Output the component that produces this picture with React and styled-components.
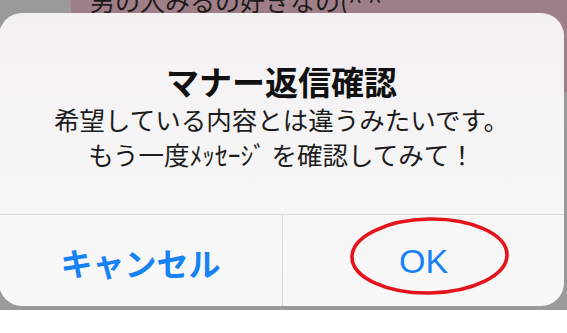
import React from 'react'
import styled, { createGlobalStyle } from 'styled-components'

const GlobalStyle = createGlobalStyle`
  html, body {
    margin: 0;
    padding: 0;
    background: #ffffff;
  }
  body {
    font-family: "Noto Sans CJK JP", "Noto Sans", sans-serif;
  }
`

const Screen = styled.div`
  position: relative;
  width: 567px;
  height: 333px;
  overflow: hidden;
  background: #ffffff;
`

const Backdrop = styled.div`
  height: 310px;
  background: #9a9a9a;
  display: flex;
  padding-left: 71px;
  align-items: flex-start;
`

const Bubble = styled.div`
  flex: 1;
  height: 92px;
  background: #9f7f87;
  padding-left: 19px;
`

const BubbleText = styled.p`
  margin: -12px 0 0;
  font-size: 25px;
  line-height: 25px;
  color: #1e1a1b;
  white-space: nowrap;
`

const Dialog = styled.div`
  position: absolute;
  left: -1px;
  top: 13px;
  width: 565px;
  height: 293px;
  border-radius: 23px;
  overflow: hidden;
  background: linear-gradient(180deg, #f3f0f2 0%, #f6f5f6 45%, #f8f8f8 100%);
  display: flex;
  flex-direction: column;
`

const Content = styled.div`
  height: 202px;
  box-sizing: border-box;
  padding-top: 49px;
  display: flex;
  flex-direction: column;
  align-items: center;
  border-bottom: 1px solid #d8d8d8;
`

const Title = styled.h1`
  margin: 0;
  font-size: 33px;
  line-height: 38px;
  font-weight: 700;
  color: #111111;
`

const Message = styled.p`
  margin: 1px 0 0;
  font-size: 25.5px;
  line-height: 35px;
  color: #1c1c1c;
  text-align: center;
`

const Actions = styled.div`
  flex: 1;
  display: grid;
  grid-template-columns: 283px 1fr;
`

const Action = styled.button`
  border: none;
  background: transparent;
  padding: 2px 0 0;
  margin: 0;
  color: #1682f4;
  font-family: ${p => (p.$latin ? '"Liberation Sans", Arial, sans-serif' : '"Noto Sans CJK JP", sans-serif')};
  font-size: ${p => (p.$latin ? '34px' : '32px')};
  font-weight: ${p => (p.$bold ? 700 : 400)};
  border-left: ${p => (p.$divided ? '1px solid #d8d8d8' : 'none')};
  display: flex;
  align-items: center;
  justify-content: center;
`

const Circle = styled.svg`
  position: absolute;
  left: 348px;
  top: 215px;
  pointer-events: none;
`

const App = () => {
  return (
    <Screen>
      <GlobalStyle />
      <Backdrop>
        <Bubble>
          <BubbleText>男の人みるの好きなの(^ ^</BubbleText>
        </Bubble>
      </Backdrop>

      <Dialog>
        <Content>
          <Title>マナー返信確認</Title>
          <Message>
            希望している内容とは違うみたいです。
            <br />
            もう一度ﾒｯｾｰｼﾞ を確認してみて！
          </Message>
        </Content>
        <Actions>
          <Action $bold>キャンセル</Action>
          <Action $latin $divided>OK</Action>
        </Actions>
      </Dialog>

      <Circle width="164" height="82" viewBox="0 0 164 82">
        <ellipse cx="81.5" cy="41" rx="77.5" ry="37" fill="none" stroke="#e5141c" strokeWidth="3.6" transform="rotate(-1 81.5 41)" />
      </Circle>
    </Screen>
  )
}

export default App
